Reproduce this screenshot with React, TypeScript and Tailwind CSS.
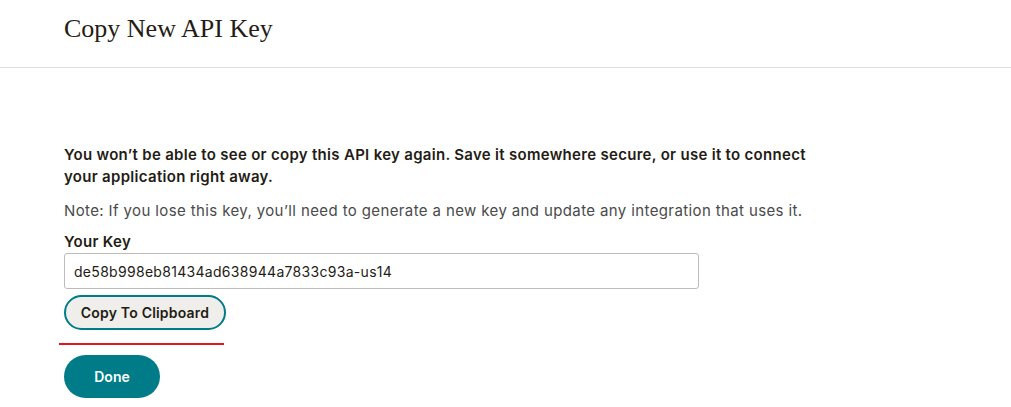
import React from "react";

export default function App() {
    const apiKey = "de58b998eb81434ad638944a7833c93a-us14";

    return (
        <div className="min-h-[407px] w-full bg-white text-[#241c15]" style={{fontFamily: 'Inter, "Liberation Sans", Arial, sans-serif'}}>
            {/* Header */}
            <div className="h-[68px] border-b border-[#dcdcdc] px-[64px] pt-[14px]">
                <h1 className="text-[26px] leading-[30px] text-[#241c15]" style={{fontFamily: '"Liberation Serif", "Times New Roman", serif'}}>
                    Copy New API Key
                </h1>
            </div>

            {/* Body */}
            <div className="px-[64px] pt-[76px]">
                <p className="w-[755px] text-[15px] leading-[22px] font-semibold tracking-[0.3px] text-[#241c15]">
                    You won’t be able to see or copy this API key again. Save it somewhere secure, or use it to connect your application right away.
                </p>
                <p className="mt-[13px] text-[15px] leading-[20px] tracking-[0.38px] text-[#4a4a4a]">
                    Note: If you lose this key, you’ll need to generate a new key and update any integration that uses it.
                </p>

                <label className="mt-[11px] block text-[15px] leading-[20px] font-semibold tracking-[0.3px] text-[#241c15]">Your Key</label>
                <input
                    readOnly
                    value={apiKey}
                    className="mt-[1px] block h-[36px] w-[635px] rounded-[3px] border border-[#bcbcbc] px-[9px] text-[14px] tracking-[0.3px] text-[#241c15] outline-none"
                />

                <button
                    type="button"
                    className="mt-[6px] h-[35px] w-[162px] rounded-full border-2 border-[#007c89] bg-[#efeeea] text-[14px] font-semibold tracking-[0.2px] text-[#241c15]"
                >
                    Copy To Clipboard
                </button>

                <div className="mt-[13px] -ml-[5px] h-[2px] w-[165px] bg-[#e3141b]" />

                <button
                    type="button"
                    className="mt-[10px] h-[43px] w-[96px] rounded-full bg-[#007c89] text-[14px] font-semibold text-white"
                >
                    Done
                </button>
            </div>
        </div>
    );
}
